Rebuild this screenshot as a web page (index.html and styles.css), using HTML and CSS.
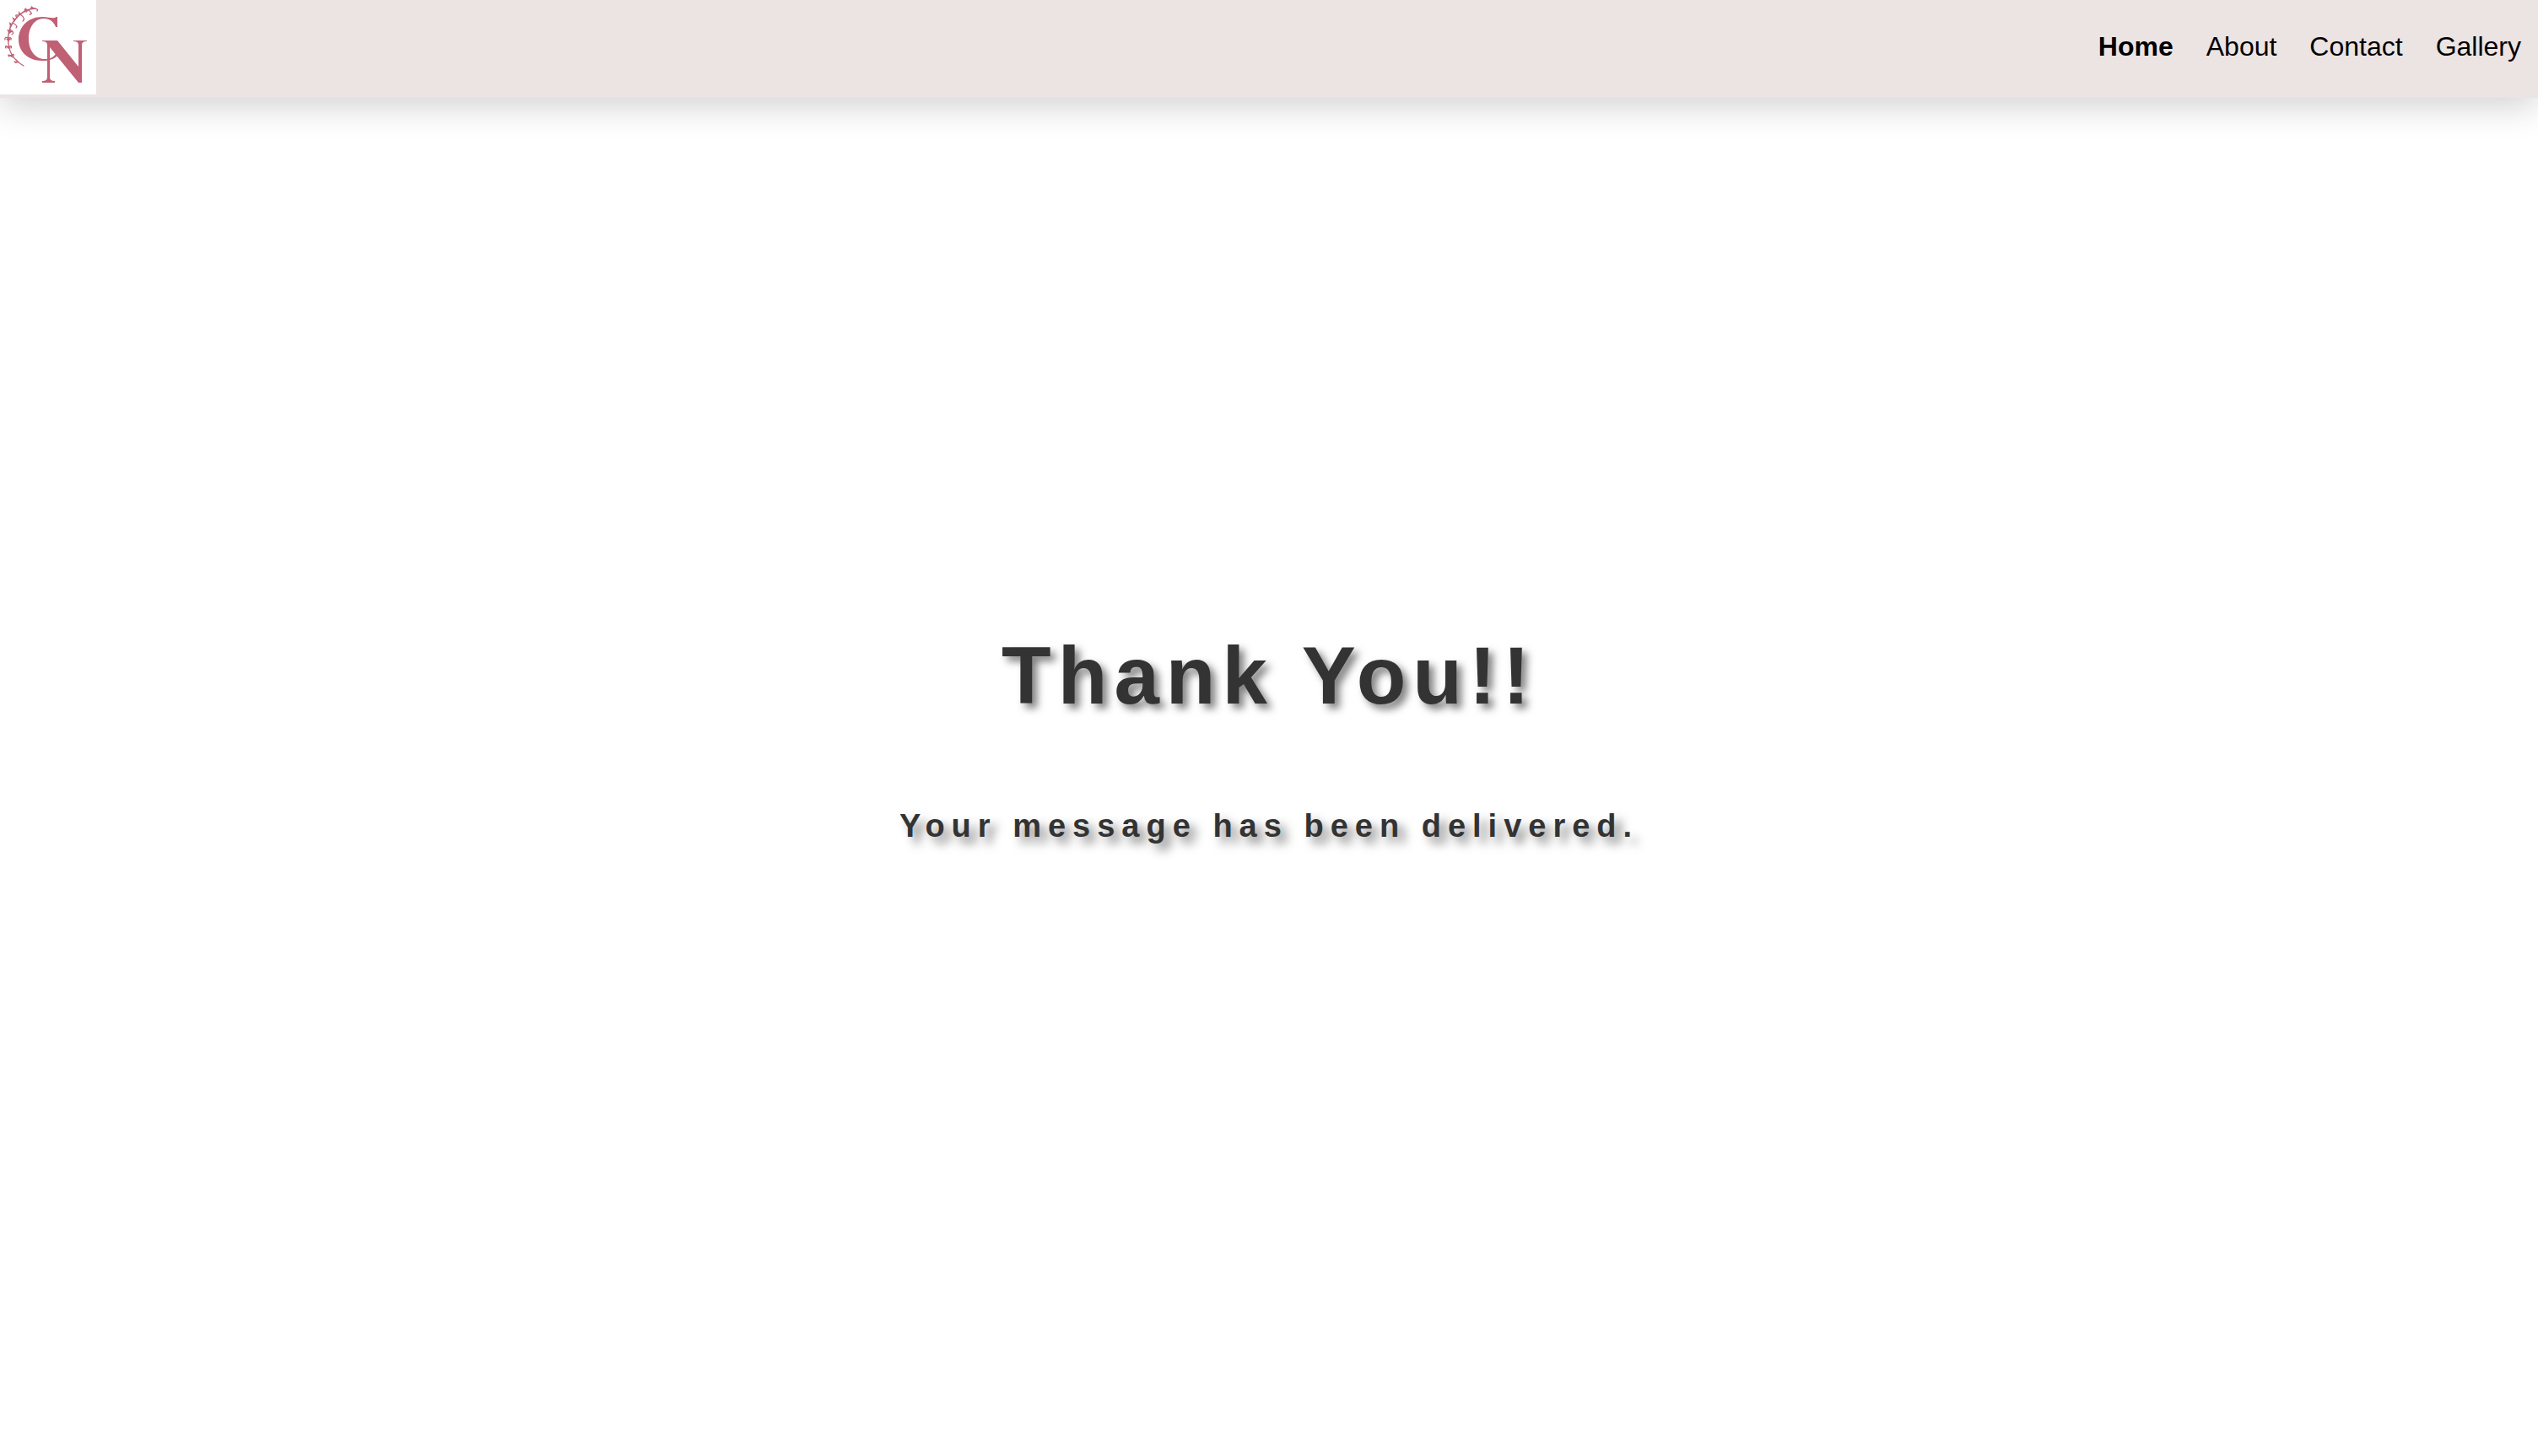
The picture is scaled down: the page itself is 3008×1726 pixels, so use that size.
FILE: index.html
```html
<!DOCTYPE html>
<html lang="en">
<head>
<meta charset="utf-8">
<title>Thank You</title>
<meta name="viewport" content="width=device-width, initial-scale=1">
<link rel="stylesheet" href="styles.css">
</head>
<body>
<header class="site-header">
  <a class="logo" href="#" aria-label="Home page">
    <svg viewBox="0 0 114 112" width="114" height="112" aria-hidden="true">
      <g fill="#c06074">
        <path d="M67 20H68V32H66C64 26 59 22 52 22C41 22 34 32 34 46C34 60 42 70 53 70C59 70 63 68 66 64L68 66C64 70 58 72 50 72C33 72 22 61 22 47C22 31 34 20 50 20C57 20 62 22 65 21Z"/>
        <path d="M50 48H68L93 79V54C93 50 91 49 87 49V48H103V49C98 49 97 51 97 54V98H93L59 56V91C59 95 61 96 65 96V98H50V96C54 96 56 95 56 91V54C56 50 54 49 50 49Z"/>
      </g>
      <g fill="none" stroke="#c06074" stroke-width="1.3" stroke-linecap="round">
        <path d="M28 78Q12 69 10 52Q8 34 18 23Q27 11 41 10"/>
        <path d="M41 10Q46 11 44 13M34 12Q40 17 35 17M30 14Q28 12 31 10M24 17Q31 22 27 25M20 21Q17 17 21 18M15 27Q22 31 19 33M12 35Q18 39 14 41M10 45Q5 43 6 47M10 45Q14 44 13 47M10 56Q5 53 7 57M10 56Q15 53 13 57M13 66Q8 64 11 67M13 66Q18 62 15 68"/>
      </g>
      <g fill="#c06074">
        <path d="M41 10L37 7L36 11ZM34 12L29 10L31 15ZM25 17L22 13L22 19ZM19 23L14 20L17 26ZM15 29L11 26L12 33ZM12 36L8 35L11 40L15 37ZM10 45L7 46L10 49L13 46ZM10 55L7 55L10 58L13 55ZM13 65L10 65L14 68L16 64ZM16 72L23 74L18 75ZM18 69L23 74L20 73Z"/>
      </g>
    </svg>
  </a>
  <nav class="nav" aria-label="Main">
    <a class="nav-link active" href="#">Home</a>
    <a class="nav-link" href="#">About</a>
    <a class="nav-link" href="#">Contact</a>
    <a class="nav-link" href="#">Gallery</a>
  </nav>
</header>
<main class="message">
  <h1 class="title">Thank You!!</h1>
  <h2 class="subtitle">Your message has been delivered.</h2>
</main>
</body>
</html>
```
FILE: styles.css
```css
* { box-sizing: border-box; }

body {
  display: flex;
  flex-direction: column;
  min-height: 100vh;
  margin: 0;
  background: #fff;
  color: #333;
  font-family: "Liberation Sans", Arial, sans-serif;
}

.site-header {
  display: flex;
  justify-content: space-between;
  align-items: flex-start;
  padding-bottom: 4px;
  background: #ece3e3;
  box-shadow: 0 10px 40px rgba(0, 0, 0, 0.18);
}

.logo {
  display: block;
  background: #fff;
}

.logo svg { display: block; }

.nav {
  display: flex;
  padding: 35px 20px 0 0;
  gap: 39px;
}

.nav-link {
  color: #000;
  font-size: 32px;
  line-height: 40px;
  text-decoration: none;
}

.active { font-weight: bold; }

.message {
  display: flex;
  flex: 1;
  flex-direction: column;
  justify-content: center;
  align-items: center;
  gap: 100px;
  padding-bottom: 96px;
  text-align: center;
}

.title,
.subtitle {
  margin: 0;
}

.title {
  font-size: 96px;
  line-height: 112px;
  letter-spacing: 8px;
  text-shadow: 6px 6px 10px rgba(0, 0, 0, 0.5);
}

.subtitle {
  font-size: 38px;
  line-height: 44px;
  letter-spacing: 8px;
  text-shadow: 8px 8px 12px rgba(0, 0, 0, 0.5);
}
```
